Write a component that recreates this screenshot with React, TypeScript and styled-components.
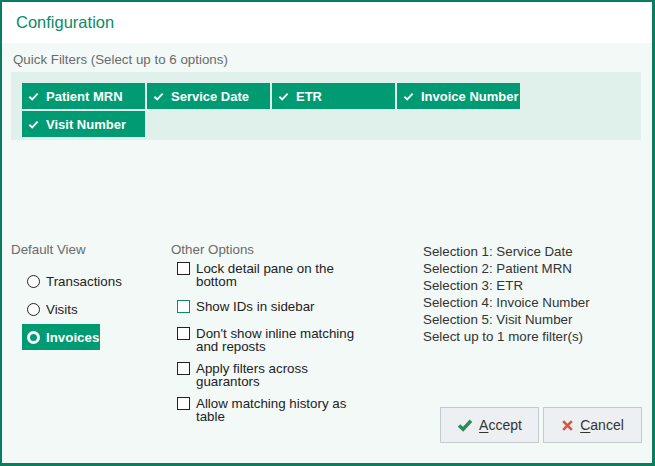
import React from "react";
import styled, { createGlobalStyle } from "styled-components";

const Global = createGlobalStyle`
  html, body { margin: 0; padding: 0; background: #5a6a66; }
  body { font-family: "Liberation Sans", Arial, sans-serif; }
  * { box-sizing: border-box; }
`;

const green = "#009b72";
const fs = "13.33px";

const Dialog = styled.div`
  width: 655px;
  height: 466px;
  border-style: solid;
  border-color: #0a7d5e;
  border-width: 2px 3px 3px 2px;
  background: #f2f9f7;
  display: flex;
  flex-direction: column;
`;

const Header = styled.div`
  height: 41px;
  background: #ffffff;
  display: flex;
  align-items: center;
  padding-left: 14px;
`;

const Title = styled.h1`
  margin: 0;
  font-size: 16.5px;
  font-weight: 400;
  color: #0e8a66;
`;

const Body = styled.div`
  flex: 1;
  display: flex;
  flex-direction: column;
  padding: 8px 11px 0 9px;
`;

const SectionLabel = styled.div<{ $indent?: number }>`
  font-size: ${fs};
  color: #6b6b6b;
  line-height: 17px;
  padding-left: ${(p) => p.$indent ?? 0}px;
`;

const FilterBox = styled.div`
  margin-top: 4px;
  background: #e0f1ec;
  height: 68px;
  padding: 11px 11px 3px 11px;
  display: flex;
  flex-wrap: wrap;
  align-content: flex-start;
  gap: 2px;
`;

const Chip = styled.div`
  width: 123px;
  height: 26px;
  background: ${green};
  color: #fff;
  font-size: 13px;
  font-weight: 700;
  white-space: nowrap;
  overflow: hidden;
  display: flex;
  align-items: center;
  padding-left: 6px;
  gap: 7px;
`;

const Lower = styled.div`
  margin-top: 101px;
  display: grid;
  grid-template-columns: 160px 252px 1fr;
  position: relative;
  flex: 1;
`;

const Col = styled.div`
  display: flex;
  flex-direction: column;
`;

const RadioList = styled.div`
  margin-top: 10px;
  padding-left: 11px;
  display: flex;
  flex-direction: column;
  gap: 2px;
`;

const RadioRow = styled.div<{ $selected?: boolean }>`
  height: 26px;
  width: ${(p) => (p.$selected ? "78px" : "auto")};
  align-self: flex-start;
  display: flex;
  align-items: center;
  gap: 6px;
  padding-left: 5px;
  padding-right: 6px;
  font-size: ${fs};
  color: ${(p) => (p.$selected ? "#fff" : "#222")};
  font-weight: ${(p) => (p.$selected ? 700 : 400)};
  background: ${(p) => (p.$selected ? green : "transparent")};
`;

const RadioCircle = styled.span<{ $selected?: boolean }>`
  width: 13px;
  height: 13px;
  border-radius: 50%;
  flex: none;
  background: ${(p) => (p.$selected ? green : "#fff")};
  border: ${(p) => (p.$selected ? "3.5px solid #fff" : "1px solid #222")};
`;

const CheckList = styled.div`
  margin-top: 4px;
  padding-left: 6px;
  display: flex;
  flex-direction: column;
  gap: 9px;
`;

const CheckRow = styled.div<{ $first?: boolean }>`
  display: flex;
  align-items: flex-start;
  gap: 6px;
  font-size: ${fs};
  line-height: 13px;
  color: #222;
  width: 200px;
  min-height: 18px;
  margin-bottom: ${(p) => (p.$first ? "3px" : "0")};
`;

const Box = styled.span<{ $focus?: boolean }>`
  width: 13px;
  height: 13px;
  flex: none;
  background: #fff;
  border: 1px solid ${(p) => (p.$focus ? "#0e8a66" : "#222")};
`;

const Selections = styled.div`
  padding-top: 2px;
  font-size: ${fs};
  line-height: 17px;
  color: #333;
`;

const Buttons = styled.div`
  position: absolute;
  right: -1px;
  bottom: 20px;
  display: flex;
  gap: 4px;
`;

const Button = styled.button`
  width: 99px;
  height: 36px;
  background: #edf0f3;
  border: 1px solid #c5cacf;
  border-radius: 0;
  display: flex;
  align-items: center;
  justify-content: center;
  gap: 6px;
  font-family: inherit;
  font-size: 14px;
  color: #333;
  padding: 0;
  u { text-decoration: underline; text-underline-offset: 2px; }
`;

const Check = ({ size = 11, color = "#fff", w = 2 }: { size?: number; color?: string; w?: number }) => (
  <svg width={size} height={size} viewBox="0 0 12 12" style={{ flex: "none" }}>
    <path d="M1.5 6.3 L4.6 9.2 L10.5 2.8" fill="none" stroke={color} strokeWidth={w} />
  </svg>
);

const filters = ["Patient MRN", "Service Date", "ETR", "Invoice Number", "Visit Number"];
const options: string[][] = [
  ["Lock detail pane on the", "bottom"],
  ["Show IDs in sidebar"],
  ["Don't show inline matching", "and reposts"],
  ["Apply filters across", "guarantors"],
  ["Allow matching history as", "table"],
];
const selections = [
  "Selection 1: Service Date",
  "Selection 2: Patient MRN",
  "Selection 3: ETR",
  "Selection 4: Invoice Number",
  "Selection 5: Visit Number",
  "Select up to 1 more filter(s)",
];

export default function App() {
  return (
    <>
      <Global />
      <Dialog>
        <Header>
          <Title>Configuration</Title>
        </Header>
        <Body>
          <SectionLabel $indent={2}>Quick Filters (Select up to 6 options)</SectionLabel>
          <FilterBox>
            {filters.map((f) => (
              <Chip key={f}>
                <Check />
                {f}
              </Chip>
            ))}
          </FilterBox>
          <Lower>
            <Col>
              <SectionLabel>Default View</SectionLabel>
              <RadioList>
                {["Transactions", "Visits", "Invoices"].map((r) => (
                  <RadioRow key={r} $selected={r === "Invoices"}>
                    <RadioCircle $selected={r === "Invoices"} />
                    {r}
                  </RadioRow>
                ))}
              </RadioList>
            </Col>
            <Col>
              <SectionLabel>Other Options</SectionLabel>
              <CheckList>
                {options.map((o, i) => (
                  <CheckRow key={i} $first={i === 0}>
                    <Box $focus={i === 1} />
                    <span>
                      {o.map((l, j) => (
                        <div key={j}>{l}</div>
                      ))}
                    </span>
                  </CheckRow>
                ))}
              </CheckList>
            </Col>
            <Col>
              <Selections>
                {selections.map((s) => (
                  <div key={s}>{s}</div>
                ))}
              </Selections>
            </Col>
            <Buttons>
              <Button>
                <Check size={16} color="#2e8b57" w={2.6} />
                <span><u>A</u>ccept</span>
              </Button>
              <Button>
                <svg width="13" height="13" viewBox="0 0 12 12">
                  <path d="M2 2 L10 10 M10 2 L2 10" stroke="#d9553f" strokeWidth="2.4" />
                </svg>
                <span><u>C</u>ancel</span>
              </Button>
            </Buttons>
          </Lower>
        </Body>
      </Dialog>
    </>
  );
}
